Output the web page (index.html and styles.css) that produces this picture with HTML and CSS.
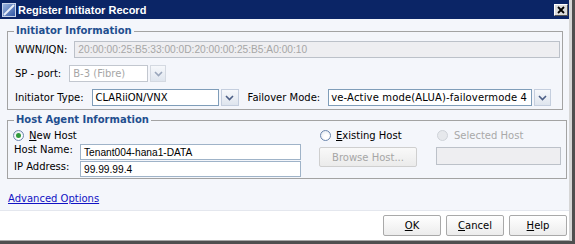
FILE: index.html
```html
<!DOCTYPE html>
<html lang="en">
<head>
    <meta charset="UTF-8">
    <link rel="stylesheet" href="styles.css">
    <title>Register Initiator Record</title>
</head>
<body>
    <div class="dialog">
        <div class="frame">
            <div class="titlebar">
                <svg class="app-icon" width="14" height="14" viewBox="0 0 14 14">
                    <defs>
                        <linearGradient id="ig" x1="0" y1="0" x2="1" y2="1">
                            <stop offset="0" stop-color="#9fb8e0"/>
                            <stop offset="1" stop-color="#2f55a4"/>
                        </linearGradient>
                    </defs>
                    <rect x="0.5" y="0.5" width="13" height="13" fill="url(#ig)" stroke="#c8d4ea"/>
                    <path d="M2 12 L12 2" stroke="#e8eefa" stroke-width="2"/>
                </svg>
                <span class="title">Register Initiator Record</span>
                <span class="close">
                    <svg width="8" height="8" viewBox="0 0 8 8">
                        <path d="M1 1 L7 7 M7 1 L1 7" stroke="#000" stroke-width="1.8"/>
                    </svg>
                </span>
            </div>

            <div class="content">
                <fieldset class="group group-initiator">
                    <legend>Initiator Information</legend>
                    <div class="row">
                        <span class="label">WWN/IQN:</span>
                        <div class="textbox disabled wwn">20:00:00:25:B5:33:00:0D:20:00:00:25:B5:A0:00:10</div>
                    </div>
                    <div class="row">
                        <span class="label">SP - port:</span>
                        <div class="combo disabled combo-sp">
                            <div class="combo-field">B-3 (Fibre)</div>
                            <span class="combo-btn"><svg width="9" height="6" viewBox="0 0 9 6"><path d="M1 1 L4.5 4.5 L8 1" fill="none" stroke="#9aa6bb" stroke-width="1.6"/></svg></span>
                        </div>
                    </div>
                    <div class="row">
                        <span class="label">Initiator Type:</span>
                        <div class="combo combo-type">
                            <div class="combo-field">CLARiiON/VNX</div>
                            <span class="combo-btn"><svg width="9" height="6" viewBox="0 0 9 6"><path d="M1 1 L4.5 4.5 L8 1" fill="none" stroke="#4d5f86" stroke-width="1.6"/></svg></span>
                        </div>
                        <span class="label failover-label">Failover Mode:</span>
                        <div class="combo combo-failover">
                            <div class="combo-field">ve-Active mode(ALUA)-failovermode 4</div>
                            <span class="combo-btn"><svg width="9" height="6" viewBox="0 0 9 6"><path d="M1 1 L4.5 4.5 L8 1" fill="none" stroke="#4d5f86" stroke-width="1.6"/></svg></span>
                        </div>
                    </div>
                </fieldset>

                <fieldset class="group group-host">
                    <legend>Host Agent Information</legend>
                    <div class="host-cols">
                        <div class="host-col new-host">
                            <div class="radio"><span class="radio-dot checked"></span><span><u>N</u>ew Host</span></div>
                            <div class="host-grid">
                                <span class="label">Host Name:</span>
                                <div class="textbox plain">Tenant004-hana1-DATA</div>
                                <span class="label">IP Address:</span>
                                <div class="textbox plain">99.99.99.4</div>
                            </div>
                        </div>
                        <div class="host-col existing-host">
                            <div class="radio"><span class="radio-dot"></span><span><u>E</u>xisting Host</span></div>
                            <div class="button disabled browse">Browse Host...</div>
                        </div>
                        <div class="host-col selected-host">
                            <div class="radio disabled"><span class="radio-dot"></span><span>Selected Host</span></div>
                            <div class="textbox disabled selected-box"></div>
                        </div>
                    </div>
                </fieldset>

                <a class="advanced" href="#">Advanced Options</a>
            </div>

            <div class="footer">
                <div class="button"><u>O</u>K</div>
                <div class="button"><u>C</u>ancel</div>
                <div class="button"><u>H</u>elp</div>
            </div>
        </div>
    </div>
</body>
</html>
```

FILE: styles.css
```css
body {
    margin: 0;
    padding: 0;
    font-family: "DejaVu Sans", Verdana, sans-serif;
    font-size: 10px;
    color: #000;
    background-color: #ffffff;
}

.dialog {
    width: 575px;
    height: 244px;
    box-sizing: border-box;
    border-right: 3px solid #4f4f4f;
    border-bottom: 3px solid #4f4f4f;
    background-color: #d4d4d4;
}

.frame {
    height: 241px;
    box-sizing: border-box;
    border-right: 3px solid #d6d6d6;
    border-bottom: 1px solid #a8a8a8;
    display: flex;
    flex-direction: column;
}

/* title bar */
.titlebar {
    height: 19px;
    background-color: #0b2566;
    display: flex;
    align-items: center;
    padding-left: 2px;
    color: #fff;
}

.app-icon {
    flex: none;
}

.title {
    margin-left: 2px;
    font-family: "Liberation Sans", Arial, sans-serif;
    font-weight: bold;
    font-size: 11px;
}

.close {
    margin-left: auto;
    margin-right: 1px;
    width: 14px;
    height: 12px;
    box-sizing: border-box;
    background-color: #dcdcdc;
    border: 1px solid #fff;
    border-right-color: #555;
    border-bottom-color: #555;
    display: flex;
    align-items: center;
    justify-content: center;
}

/* body */
.content {
    height: 191px;
    background-color: #f4f6fb;
    display: flex;
    flex-direction: column;
    align-items: flex-start;
}

.group {
    margin: 0;
    border: 1px solid #a3a3a3;
    box-sizing: border-box;
}

.group legend {
    padding: 0 2px;
    font-weight: bold;
    color: #1f4f8f;
    line-height: 12px;
}

.group-initiator {
    margin: 6px 0 0 7px;
    width: 556px;
    padding: 4px 1px 3px 7px;
    display: flex;
    flex-direction: column;
    gap: 7px;
}

.group-initiator legend {
    margin-left: -1px;
}

.group-host {
    margin: 4px 0 0 7px;
    width: 560px;
    padding: 3px 4px 1px 5px;
}

.group-host legend {
    margin-left: 1px;
}

.row {
    display: flex;
    align-items: center;
    height: 17px;
}

.label {
    white-space: nowrap;
}

.row .label {
    margin-right: 8px;
}

.failover-label {
    margin-left: 9px;
}

.textbox {
    height: 17px;
    box-sizing: border-box;
    border: 1px solid #7f9db9;
    background-color: #fff;
    padding: 0 3px;
    display: flex;
    align-items: center;
    white-space: nowrap;
    overflow: hidden;
    font-family: "Liberation Sans", Arial, sans-serif;
    font-size: 10.2px;
}

.textbox.disabled {
    border-color: #bcc1c9;
    background-color: #eeeef1;
    color: #a6a6a6;
}

.wwn {
    width: 486px;
    margin-left: -1px;
}

/* combo boxes */
.combo {
    display: flex;
    gap: 2px;
    height: 17px;
}

.combo-field {
    box-sizing: border-box;
    height: 17px;
    border: 1px solid #7f9db9;
    background-color: #fff;
    padding: 0 3px;
    display: flex;
    align-items: center;
    white-space: nowrap;
}

.combo-btn {
    width: 17px;
    height: 17px;
    box-sizing: border-box;
    border: 1px solid #c4cede;
    background: linear-gradient(#f6f8fb, #dfe5ee);
    display: flex;
    align-items: center;
    justify-content: center;
}

.combo.disabled .combo-field {
    border-color: #c2c7cf;
    color: #a6a6a6;
}

.combo.disabled .combo-btn {
    border-color: #d4d9e1;
}

.combo-sp .combo-field {
    width: 79px;
}

.combo-sp .combo-btn {
    width: 16px;
}

.combo-type .combo-field {
    width: 127px;
}

.combo-type .combo-btn {
    width: 18px;
}

.combo-failover .combo-field {
    width: 204px;
    padding-left: 2px;
    letter-spacing: 0.15px;
}

/* host agent */
.host-cols {
    display: flex;
}

.host-col {
    display: flex;
    flex-direction: column;
}

.new-host {
    width: 288px;
    gap: 2px;
}

.existing-host {
    margin-left: 18px;
    width: 98px;
    gap: 5px;
}

.selected-host {
    margin-left: 19px;
    width: 125px;
    gap: 5px;
}

.radio {
    height: 13px;
    display: flex;
    align-items: center;
    gap: 5px;
}

.existing-host .radio {
    padding-left: 1px;
}

.selected-host .radio {
    padding-left: 1px;
    gap: 6px;
}

.radio-dot {
    width: 11px;
    height: 11px;
    box-sizing: border-box;
    border-radius: 50%;
    border: 1px solid #6b86ad;
    background: radial-gradient(circle at 60% 65%, #ffffff 30%, #d9e0ea 100%);
    display: flex;
    align-items: center;
    justify-content: center;
}

.radio-dot.checked::after {
    content: "";
    width: 5px;
    height: 5px;
    border-radius: 50%;
    background-color: #2f9a3c;
}

.radio.disabled {
    color: #a9a9a9;
}

.radio.disabled .radio-dot {
    border-color: #cfd3d9;
    background: #e6e8ec;
}

.host-grid {
    display: grid;
    grid-template-columns: 66px 221px;
    row-gap: 1px;
    padding-left: 1px;
}

.host-grid .textbox {
    height: 16px;
}

.plain {
    border-color: #9fb3c8;
}

.selected-box {
    width: 125px;
    height: 18px;
}

/* buttons */
.button {
    box-sizing: border-box;
    width: 58px;
    height: 21px;
    border: 1px solid #a9a9a9;
    border-radius: 2px;
    background: linear-gradient(#ffffff, #ececec);
    display: flex;
    align-items: center;
    justify-content: center;
    white-space: nowrap;
}

.button.disabled {
    color: #a6a6a6;
    border-color: #cfcfcf;
    background: linear-gradient(#f9f9f9, #ebebeb);
}

.browse {
    width: 98px;
    height: 20px;
}

.advanced {
    margin: 14px 0 0 8px;
    line-height: 12px;
    color: #1212c4;
}

.footer {
    flex: 1;
    background-color: #ffffff;
    border-top: 1px solid #e4e7ee;
    display: flex;
    justify-content: flex-end;
    align-items: flex-start;
    gap: 5px;
    padding: 4px 2px 0 0;
}
```
